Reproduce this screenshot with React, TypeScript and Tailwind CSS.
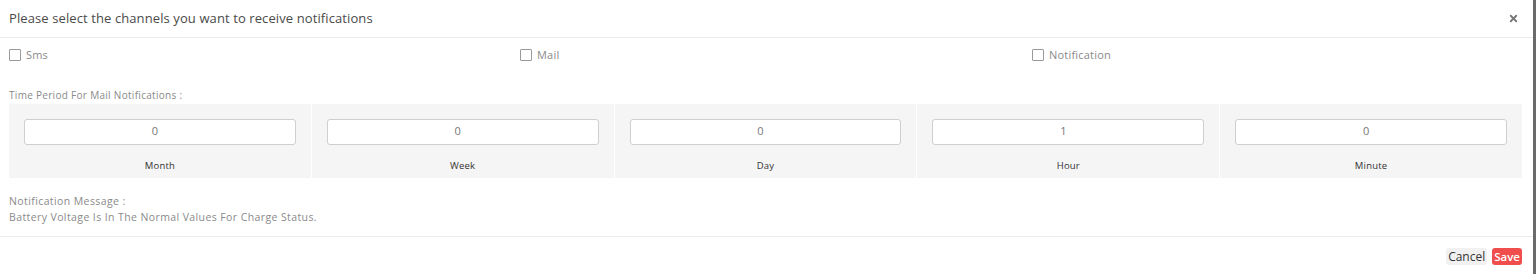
import { X } from "lucide-react";

const periods = [
  { label: "Month", value: "0" },
  { label: "Week", value: "0" },
  { label: "Day", value: "0" },
  { label: "Hour", value: "1" },
  { label: "Minute", value: "0" },
];

const channels = ["Sms", "Mail", "Notification"];

export default function App() {
  return (
    <div
      className="flex h-[274px] w-[1536px] bg-white text-[#5e6278]"
      style={{ fontFamily: '"Open Sans", "Liberation Sans", sans-serif' }}
    >
      <div className="flex w-[1533px] flex-col">
        {/* header */}
        <div className="flex h-[38px] items-center justify-between border-b border-[#ebebeb] pl-[9px] pr-[14px]">
          <h2 className="text-[13px] tracking-[0.1px] text-[#4a4a4a]">
            Please select the channels you want to receive notifications
          </h2>
          <X size={11} strokeWidth={4} className="text-[#777]" />
        </div>

        {/* channels */}
        <div className="grid grid-cols-[511px_512px_1fr] pl-[9px] pt-[9px]">
          {channels.map((c) => (
            <label key={c} className="flex items-center gap-[5px] text-[11px] tracking-[0.2px] text-[#8a8a8a]">
              <span className="h-[12px] w-[12px] rounded-[1px] border border-[#9a9a9a] bg-white" />
              {c}
            </label>
          ))}
        </div>

        {/* period */}
        <div className="px-[9px] pt-[24px]">
          <p className="text-[10px] leading-[14px] tracking-[0.3px] text-[#8a8a8a]">
            Time Period For Mail Notifications :
          </p>
          <div className="mr-[2px] mt-[2px] grid grid-cols-5 gap-px bg-white">
            {periods.map((p) => (
              <div key={p.label} className="flex h-[74px] flex-col items-center bg-[#f5f5f5] px-[15px] pt-[15px]">
                <div className="flex h-[26px] w-full items-center justify-center rounded-[3px] border border-[#cfcfcf] bg-white pr-[10px] text-[11px] text-[#777]">
                  {p.value}
                </div>
                <span className="mt-[14px] text-[9.5px] tracking-[0.2px] text-[#333]">{p.label}</span>
              </div>
            ))}
          </div>
        </div>

        {/* message */}
        <div className="border-b border-[#ebebeb] px-[9px] pb-[11px] pt-[15px] text-[10.5px] leading-[16px] tracking-[0.4px] text-[#8a8a8a]">
          <p>Notification Message :</p>
          <p>Battery Voltage Is In The Normal Values For Charge Status.</p>
        </div>

        {/* footer */}
        <div className="flex justify-end gap-[5px] pr-[11px] pt-[11px]">
          <button className="h-[17px] rounded-[3px] bg-[#f1f1f1] px-[2px] text-[12px] leading-[17px] text-[#333]">
            Cancel
          </button>
          <button className="h-[17px] rounded-[3px] bg-[#f04d4d] px-[2px] text-[11.5px] font-semibold leading-[17px] text-white">
            Save
          </button>
        </div>
      </div>
      <div className="w-[3px] bg-[#6b6b6b]" />
    </div>
  );
}
